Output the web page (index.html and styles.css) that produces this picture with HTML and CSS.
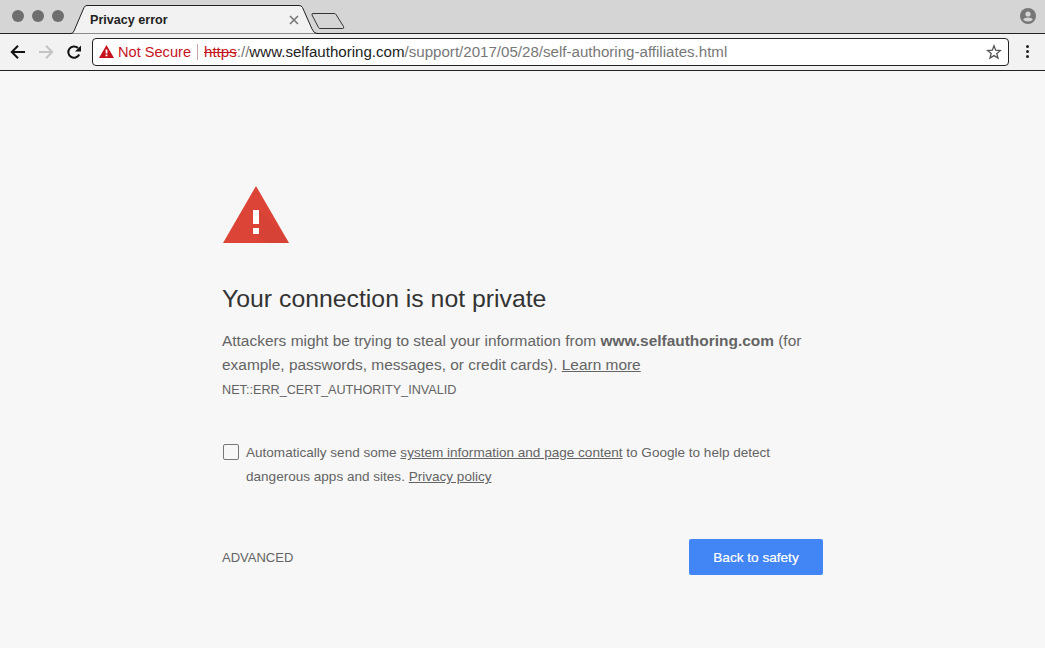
FILE: index.html
```html
<!DOCTYPE html>
<html lang="en">
<head>
    <meta charset="UTF-8">
    <meta name="viewport" content="width=device-width, initial-scale=1.0">
    <title>Privacy error</title>
    <link rel="stylesheet" href="styles.css">
</head>
<body>
    <div class="tabstrip">
        <div class="lights">
            <span class="light"></span>
            <span class="light"></span>
            <span class="light"></span>
        </div>
        <div class="tab">
            <svg class="tab-shape" width="250" height="34" viewBox="0 0 250 34">
                <path d="M0 33.500H1Q3 33.500 4 31L14 7.500Q15 5.500 17 5.500H229Q231.500 5.500 232.500 7.500L242 29Q244 33.500 247 33.500H250V34H0Z" fill="#f2f2f2" stroke="#222" stroke-width="1"/>
            </svg>
            <span class="tab-title">Privacy error</span>
            <svg class="tab-close" width="10" height="10" viewBox="0 0 10 10">
                <path d="M1 1L9 9M9 1L1 9" stroke="#777" stroke-width="1.600" fill="none"/>
            </svg>
        </div>
        <svg class="newtab" width="36" height="18" viewBox="0 0 36 18">
            <path d="M3 1.500H24Q25.500 1.500 26 2.500L33.500 14.500Q34.500 16.500 32.500 16.500H10Q9 16.500 8.500 15.500L2 3Q1.500 1.500 3 1.500Z" fill="#d5d5d5" stroke="#333" stroke-width="1"/>
        </svg>
        <svg class="profile" width="16" height="16" viewBox="0 0 16 16">
            <circle cx="8" cy="8" r="8" fill="#777"/>
            <circle cx="8" cy="6" r="2.600" fill="#d5d5d5"/>
            <path d="M3 11.600Q4.500 9.600 8 9.600T13 11.600Q11.500 13.600 8 13.600T3 11.600Z" fill="#d5d5d5"/>
        </svg>
    </div>

    <div class="toolbar">
        <button class="nav">
            <svg width="16" height="16" viewBox="0 0 16 16"><path d="M15 8H2M8 1.800L1.800 8L8 14.200" fill="none" stroke="#111" stroke-width="2"/></svg>
        </button>
        <button class="nav">
            <svg width="16" height="16" viewBox="0 0 16 16"><path d="M1 8H14M8 1.800L14.200 8L8 14.200" fill="none" stroke="#c4c4c4" stroke-width="2"/></svg>
        </button>
        <button class="nav">
            <svg width="16" height="16" viewBox="0 0 16 16"><path d="M13.200 10.500A5.700 5.700 0 1 1 12 4" fill="none" stroke="#111" stroke-width="2"/><path d="M15 1.500V7.500H9Z" fill="#111"/></svg>
        </button>
        <div class="omnibox">
            <svg class="warn" width="15" height="13" viewBox="0 0 15 13"><path d="M7.500 0L15 13H0Z" fill="#c5121c"/><path d="M6.600 4.500H8.400V8.500H6.600ZM6.600 9.500H8.400V11.200H6.600Z" fill="#fff"/></svg>
            <span class="not-secure">Not Secure</span>
            <span class="divider"></span>
            <span class="url"><s class="scheme">https</s><span class="path">://</span>www.selfauthoring.com<span class="path">/support/2017/05/28/self-authoring-affiliates.html</span></span>
            <svg class="star" width="16" height="16" viewBox="0 0 16 16"><path d="M8 1.800L9.700 6.200L14.500 6.500L10.800 9.500L12 14.100L8 11.600L4 14.100L5.200 9.500L1.500 6.500L6.300 6.200Z" fill="none" stroke="#555" stroke-width="1.300"/></svg>
        </div>
        <div class="menu">
            <span class="dot"></span>
            <span class="dot"></span>
            <span class="dot"></span>
        </div>
    </div>

    <div class="page">
        <div class="content">
            <svg class="icon" width="66" height="57" viewBox="0 0 66 57">
                <path d="M33 0L66 57H0Z" fill="#dc4437"/>
                <path d="M36 24L63 52L66 57H44L30 46V42H36Z" fill="#c23a2e" opacity="0.25"/>
                <path d="M30 24H36V38H30ZM30 42H36V48H30Z" fill="#fff"/>
            </svg>
            <h1 class="heading">Your connection is not private</h1>
            <p class="message">Attackers might be trying to steal your information from <b>www.selfauthoring.com</b> (for example, passwords, messages, or credit cards). <a href="#">Learn more</a></p>
            <p class="code">NET::ERR_CERT_AUTHORITY_INVALID</p>
            <div class="optin">
                <span class="checkbox"></span>
                <p class="optin-text">Automatically send some <a href="#">system information and page content</a> to Google to help detect dangerous apps and sites. <a href="#">Privacy policy</a></p>
            </div>
            <div class="actions">
                <span class="advanced">ADVANCED</span>
                <button class="submit">Back to safety</button>
            </div>
        </div>
    </div>
</body>
</html>
```

FILE: styles.css
```css
* {
    box-sizing: border-box;
}
html, body {
    height: 100%;
}
body {
    margin: 0;
    display: flex;
    flex-direction: column;
    overflow: hidden;
    background-color: #f7f7f7;
    font-family: "Liberation Sans", Arial, sans-serif;
}
.tabstrip {
    display: flex;
    align-items: flex-start;
    height: 34px;
    flex-shrink: 0;
    background-color: #d5d5d5;
    border-bottom: 1px solid #222;
}
.lights {
    display: flex;
    gap: 8px;
    padding: 10px 0 0 12px;
    width: 70px;
}
.light {
    width: 12px;
    height: 12px;
    border-radius: 50%;
    background-color: #6e6e6e;
}
.tab {
    position: relative;
    display: flex;
    align-items: center;
    justify-content: space-between;
    width: 250px;
    height: 34px;
    padding: 5px 21px 0 20px;
    flex-shrink: 0;
}
.tab-shape {
    position: absolute;
    left: 0;
    top: 0;
}
.tab-title, .tab-close {
    position: relative;
}
.tab-title {
    font-size: 12.600px;
    font-weight: 700;
    color: #222;
}
.newtab {
    margin: 12px 0 0 -10px;
}
.profile {
    margin: 8px 9px 0 auto;
}
.toolbar {
    display: flex;
    align-items: center;
    height: 37px;
    flex-shrink: 0;
    padding: 0 10px 1px 10px;
    gap: 12px;
    background-color: #f2f2f2;
    border-bottom: 1px solid #222;
}
.nav {
    display: flex;
    width: 16px;
    height: 16px;
    padding: 0;
    border: none;
    background: none;
}
.omnibox {
    display: flex;
    align-items: center;
    flex: 1;
    height: 28px;
    margin-left: -2px;
    padding: 0 6px 0 6px;
    border: 1px solid #222;
    border-radius: 4px;
    background-color: #fff;
    font-size: 15.100px;
}
.warn {
    margin-right: 4px;
}
.not-secure {
    color: #c5121c;
    font-size: 14.600px;
}
.divider {
    width: 1px;
    height: 16px;
    margin: 0 6px;
    background-color: #c9a5a5;
}
.url {
    flex: 1;
    color: #222;
    white-space: nowrap;
}
.scheme {
    color: #c5121c;
}
.path {
    color: #777;
}
.menu {
    display: flex;
    flex-direction: column;
    gap: 2px;
    margin: 0 6px 0 5px;
}
.dot {
    width: 3px;
    height: 3px;
    border-radius: 50%;
    background-color: #222;
}
.page {
    flex: 1;
    display: flex;
    padding-left: 222px;
}
.content {
    width: 601px;
    padding-top: 115px;
    color: #646464;
}
.icon {
    display: block;
    margin-left: 1px;
}
.heading {
    margin: 41px 0 0 0;
    font-size: 24.800px;
    font-weight: 400;
    line-height: 30px;
    color: #333;
}
.message {
    margin: 15px 0 0 0;
    font-size: 15.450px;
    line-height: 24px;
}
.message b {
    font-weight: 700;
}
a {
    color: #646464;
}
.code {
    margin: 3px 0 0 0;
    font-size: 12.660px;
    line-height: 20px;
}
.optin {
    display: flex;
    gap: 7px;
    margin-top: 44px;
}
.checkbox {
    width: 16px;
    height: 16px;
    margin-left: 1px;
    flex-shrink: 0;
    border: 1px solid #777;
    border-radius: 2px;
}
.optin-text {
    margin: -3px 0 0 0;
    font-size: 13.550px;
    line-height: 24px;
}
.actions {
    display: flex;
    justify-content: space-between;
    align-items: center;
    margin-top: 50px;
}
.advanced {
    font-size: 13px;
}
.submit {
    width: 134px;
    height: 36px;
    border: none;
    border-radius: 2px;
    background-color: #4285f4;
    color: #fff;
    font-family: inherit;
    font-size: 13.600px;
    font-weight: 400;
    -webkit-text-stroke: 0.2px #fff;
}
```
